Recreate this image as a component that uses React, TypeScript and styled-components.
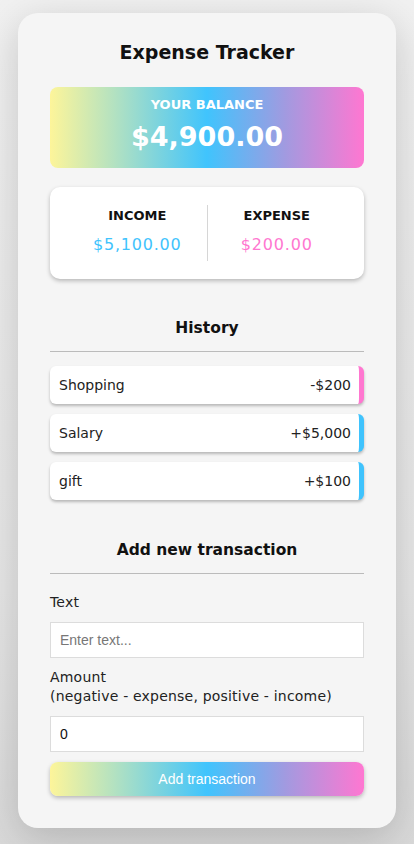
import React from "react";
import styled, { createGlobalStyle } from "styled-components";

const GRADIENT =
  "linear-gradient(90deg, #fdf59a 0%, #b5e2c0 20%, #40c4fd 50%, #a29ae0 75%, #ff77d1 100%)";
const BLUE = "#3fc3fd";
const PINK = "#ff77d0";

const GlobalStyle = createGlobalStyle`
  * { box-sizing: border-box; }
  body {
    margin: 0;
    background: #f0f0f0;
    font-family: "DejaVu Sans", "Open Sans", sans-serif;
    color: #111;
  }
`;

const Page = styled.div`
  min-height: 844px;
  padding: 13px 18px 16px;
  background: linear-gradient(180deg, #f1f1f1 0%, #e6e6e6 70%, #d9d9d9 100%);
`;

const Card = styled.div`
  background: #f5f5f5;
  border-radius: 20px;
  padding: 24px 32px 32px;
  box-shadow: 0 10px 40px rgba(0, 0, 0, 0.18);
`;

const Title = styled.h1`
  margin: 0;
  text-align: center;
  font-size: 19px;
  font-weight: 700;
  line-height: 30px;
`;

const BalanceBox = styled.div`
  margin-top: 20px;
  height: 81px;
  border-radius: 8px;
  background: ${GRADIENT};
  color: #fff;
  display: flex;
  flex-direction: column;
  align-items: center;
  padding-top: 9px;
`;

const BalanceLabel = styled.div`
  font-size: 13px;
  font-weight: 700;
  line-height: 18px;
`;

const BalanceValue = styled.div`
  margin-top: 5px;
  font-size: 27px;
  font-weight: 700;
  line-height: 36px;
`;

const Summary = styled.div`
  margin-top: 19px;
  height: 92px;
  padding: 0 18px;
  background: #fff;
  border-radius: 10px;
  box-shadow: 0 2px 4px rgba(0, 0, 0, 0.25);
  display: flex;
  align-items: center;
`;

const SummaryCol = styled.div<{ divided?: boolean }>`
  flex: 1;
  height: 56px;
  padding-bottom: 4px;
  display: flex;
  flex-direction: column;
  align-items: center;
  justify-content: center;
  border-left: ${(p) => (p.divided ? "1px solid #d6d6d6" : "none")};
`;

const SummaryLabel = styled.div`
  font-size: 13px;
  font-weight: 700;
  line-height: 20px;
`;

const SummaryValue = styled.div<{ color: string }>`
  margin-top: 8px;
  font-size: 16px;
  line-height: 22px;
  letter-spacing: 0.8px;
  color: ${(p) => p.color};
`;

const SectionTitle = styled.h3<{ top: number }>`
  margin: ${(p) => p.top}px 0 0;
  text-align: center;
  font-size: 15.5px;
  font-weight: 700;
  line-height: 24px;
  padding-bottom: 11px;
  border-bottom: 1px solid #bbb;
`;

const List = styled.ul`
  list-style: none;
  margin: 14px 0 0;
  padding: 0;
  display: flex;
  flex-direction: column;
  gap: 10px;
`;

const Item = styled.li<{ accent: string }>`
  height: 38px;
  background: #fff;
  border-radius: 6px;
  border-right: 5px solid ${(p) => p.accent};
  box-shadow: 0 2px 3px rgba(0, 0, 0, 0.25);
  display: flex;
  align-items: center;
  justify-content: space-between;
  padding: 0 8px 0 9px;
  font-size: 14px;
  color: #222;
`;

const Form = styled.form`
  margin-top: 19px;
  display: flex;
  flex-direction: column;
`;

const Label = styled.label<{ top: number }>`
  margin-top: ${(p) => p.top}px;
  font-size: 14px;
  line-height: 19px;
  letter-spacing: 0.2px;
  color: #222;
`;

const Input = styled.input`
  margin-top: 10px;
  height: 36px;
  width: 100%;
  border: 1px solid #dcdcdc;
  background: #fff;
  padding: 0 9px;
  font-family: "Liberation Sans", Arial, sans-serif;
  font-size: 14px;
  color: #111;
  outline: none;
  &::placeholder {
    color: #777;
  }
`;

const Button = styled.button`
  margin-top: 10px;
  height: 34px;
  border: none;
  border-radius: 8px;
  background: ${GRADIENT};
  color: #fff;
  font-family: "Liberation Sans", Arial, sans-serif;
  font-size: 14px;
  box-shadow: 0 2px 4px rgba(0, 0, 0, 0.25);
  cursor: pointer;
`;

const transactions = [
  { id: 1, text: "Shopping", amount: "-$200", accent: PINK },
  { id: 2, text: "Salary", amount: "+$5,000", accent: BLUE },
  { id: 3, text: "gift", amount: "+$100", accent: BLUE },
];

export default function App() {
  return (
    <>
      <GlobalStyle />
      <Page>
        <Card>
          <Title>Expense Tracker</Title>
          <BalanceBox>
            <BalanceLabel>YOUR BALANCE</BalanceLabel>
            <BalanceValue>$4,900.00</BalanceValue>
          </BalanceBox>
          <Summary>
            <SummaryCol>
              <SummaryLabel>INCOME</SummaryLabel>
              <SummaryValue color={BLUE}>$5,100.00</SummaryValue>
            </SummaryCol>
            <SummaryCol divided>
              <SummaryLabel>EXPENSE</SummaryLabel>
              <SummaryValue color={PINK}>$200.00</SummaryValue>
            </SummaryCol>
          </Summary>

          <SectionTitle top={37}>History</SectionTitle>
          <List>
            {transactions.map((t) => (
              <Item key={t.id} accent={t.accent}>
                <span>{t.text}</span>
                <span>{t.amount}</span>
              </Item>
            ))}
          </List>

          <SectionTitle top={38}>Add new transaction</SectionTitle>
          <Form onSubmit={(e) => e.preventDefault()}>
            <Label top={0}>Text</Label>
            <Input type="text" placeholder="Enter text..." />
            <Label top={10}>
              Amount
              <br />
              (negative - expense, positive - income)
            </Label>
            <Input type="number" defaultValue={0} />
            <Button type="submit">Add transaction</Button>
          </Form>
        </Card>
      </Page>
    </>
  );
}
